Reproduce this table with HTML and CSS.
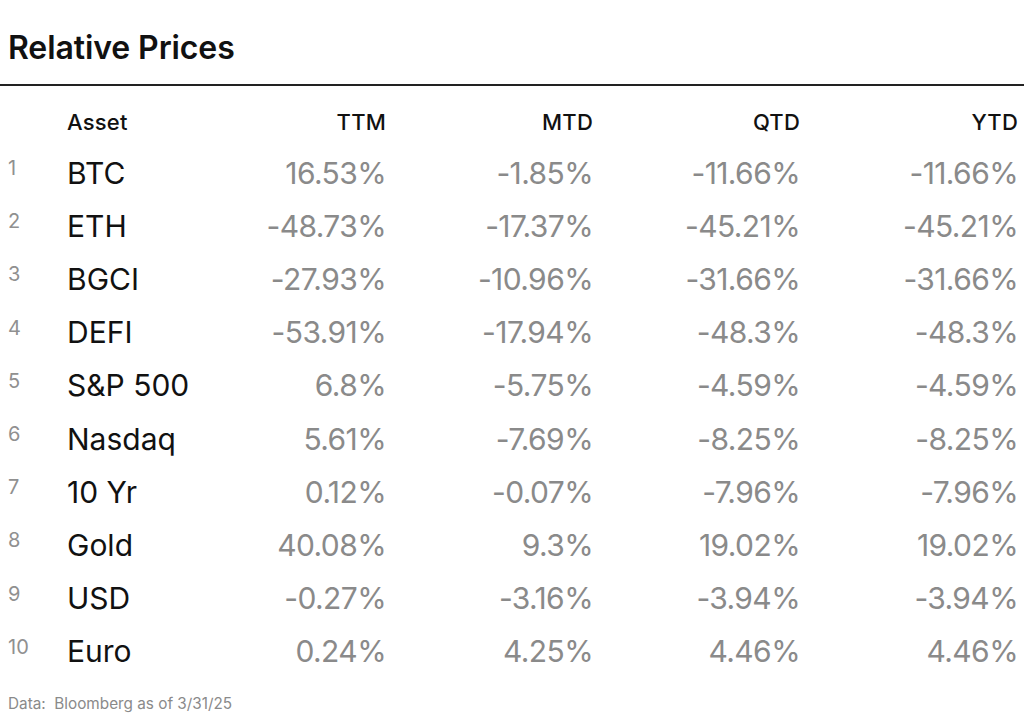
FILE: index.html
```html
<!DOCTYPE html>
<html>
<head>
<meta charset="utf-8">
<link rel="stylesheet" href="styles.css">
</head>
<body>
<h1 class="title">Relative Prices</h1>
<div class="rule"></div>
<div class="table">
  <div class="row head">
    <div class="num"></div><div class="asset">Asset</div><div class="val">TTM</div><div class="val">MTD</div><div class="val">QTD</div><div class="val">YTD</div>
  </div>
  <div class="row"><div class="num">1</div><div class="asset">BTC</div><div class="val">16.53%</div><div class="val">-1.85%</div><div class="val">-11.66%</div><div class="val">-11.66%</div></div>
  <div class="row"><div class="num">2</div><div class="asset">ETH</div><div class="val">-48.73%</div><div class="val">-17.37%</div><div class="val">-45.21%</div><div class="val">-45.21%</div></div>
  <div class="row"><div class="num">3</div><div class="asset">BGCI</div><div class="val">-27.93%</div><div class="val">-10.96%</div><div class="val">-31.66%</div><div class="val">-31.66%</div></div>
  <div class="row"><div class="num">4</div><div class="asset">DEFI</div><div class="val">-53.91%</div><div class="val">-17.94%</div><div class="val">-48.3%</div><div class="val">-48.3%</div></div>
  <div class="row"><div class="num">5</div><div class="asset">S&amp;P 500</div><div class="val">6.8%</div><div class="val">-5.75%</div><div class="val">-4.59%</div><div class="val">-4.59%</div></div>
  <div class="row"><div class="num">6</div><div class="asset">Nasdaq</div><div class="val">5.61%</div><div class="val">-7.69%</div><div class="val">-8.25%</div><div class="val">-8.25%</div></div>
  <div class="row"><div class="num">7</div><div class="asset">10 Yr</div><div class="val">0.12%</div><div class="val">-0.07%</div><div class="val">-7.96%</div><div class="val">-7.96%</div></div>
  <div class="row"><div class="num">8</div><div class="asset">Gold</div><div class="val">40.08%</div><div class="val">9.3%</div><div class="val">19.02%</div><div class="val">19.02%</div></div>
  <div class="row"><div class="num">9</div><div class="asset">USD</div><div class="val">-0.27%</div><div class="val">-3.16%</div><div class="val">-3.94%</div><div class="val">-3.94%</div></div>
  <div class="row"><div class="num">10</div><div class="asset">Euro</div><div class="val">0.24%</div><div class="val">4.25%</div><div class="val">4.46%</div><div class="val">4.46%</div></div>
</div>
<div class="foot">Data:&nbsp; Bloomberg as of 3/31/25</div>
</body>
</html>
```
FILE: styles.css
```css
html, body {
  margin: 0;
  padding: 0;
  background: #ffffff;
  font-family: Inter, "Liberation Sans", sans-serif;
  color: #111111;
}
body {
  width: 1024px;
  height: 718px;
  overflow: hidden;
}
.title {
  margin: 0;
  padding: 29px 0 0 8px;
  font-size: 32px;
  font-weight: 600;
  letter-spacing: -0.1px;
  line-height: 38px;
  height: 59px;
  box-sizing: border-box;
}
.rule {
  margin-top: 25px;
  height: 2px;
  background: #222222;
}
.table {
  padding: 0 6px 0 8px;
  margin-top: 11px;
}
.row {
  display: grid;
  grid-template-columns: 59px 150px 169px 207px 207px 218px;
  height: 53.2px;
  align-items: center;
}
.row.head {
  height: 49px;
}
.num {
  font-size: 20px;
  color: #909090;
  align-self: start;
  padding-top: 10px;
  font-weight: 400;
}
.asset {
  font-size: 30px;
  letter-spacing: 0;
  color: #111111;
}
.val {
  text-align: right;
  font-size: 30px;
  font-weight: 400;
  letter-spacing: -0.6px;
  color: #8a8a8a;
}
.head .asset, .head .val {
  font-size: 22px;
  font-weight: 500;
  color: #111111;
  letter-spacing: 0.2px;
}
.foot {
  margin: 16px 0 0 8px;
  font-size: 15.3px;
  color: #8a8a8a;
}
```
